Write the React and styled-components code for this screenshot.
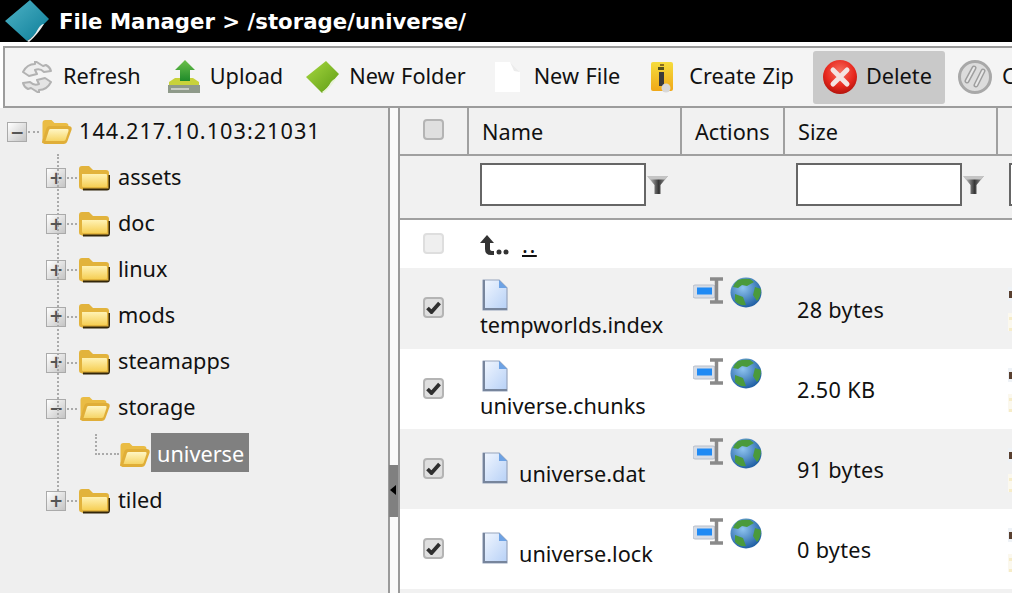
import React from "react";
import styled, { createGlobalStyle } from "styled-components";

const Global = createGlobalStyle`
  html, body { margin: 0; padding: 0; width: 1012px; height: 593px; overflow: hidden; background: #fff; }
  body { font-family: "DejaVu Sans", sans-serif; color: #111; }
  #root { width: 1012px; height: 593px; overflow: hidden; }
`;
const FONT = `"Noto Sans", "Open Sans", sans-serif`;

const Page = styled.div`display:flex;flex-direction:column;width:1012px;height:593px;overflow:hidden;font-family:${FONT};`;
const TitleBar = styled.header`display:flex;align-items:center;height:42px;flex:none;background:#000;padding-left:5px;gap:9px;`;
const Title = styled.h1`margin:0;font:bold 21.25px "DejaVu Sans",sans-serif;color:#fff;white-space:nowrap;`;
const Toolbar = styled.nav`display:flex;align-items:center;height:62px;flex:none;box-sizing:border-box;margin:4px 0 0 3px;border:2px solid #9c9c9c;border-right:0;background:#f4f4f4;padding-left:15px;overflow:hidden;`;
const ToolButton = styled.button`display:flex;align-items:center;flex:none;height:53px;box-sizing:border-box;margin:0 ${p => p.$mr ?? 0}px 0 0;padding:0 ${p => (p.$active ? "13px" : "0")} 0 ${p => (p.$active ? "9px" : "0")};gap:${p => p.$gap ?? 9}px;border:0;border-radius:3px;background:${p => (p.$active ? "#c9c9c9" : "transparent")};font:21.7px ${FONT};color:#111;white-space:nowrap;`;
const ToolLabel = styled.span`margin-bottom:4px;word-spacing:1px;`;
const Main = styled.div`display:flex;flex:1;min-height:0;`;
const TreePane = styled.aside`position:relative;width:388px;flex:none;background:#efefef;padding-top:1px;font-size:21.7px;box-sizing:border-box;`;
const TreeRow = styled.div`display:flex;align-items:center;height:46.15px;padding-left:${p => p.$indent}px;`;
const Expander = styled.span`display:flex;align-items:center;justify-content:center;width:20px;height:20px;flex:none;box-sizing:border-box;border:1px solid #aaa;background:linear-gradient(135deg,#fff,#c4c4c4);font:bold 17px/1 "DejaVu Sans",sans-serif;color:#555;`;
const Dots = styled.span`display:block;width:${p => p.$w}px;margin:0 2px 0 1px;flex:none;border-top:2px dotted #aaa;`;
const FolderSlot = styled.span`display:flex;flex:none;margin-right:${p => p.$mr ?? 8}px;`;
const TreeLabel = styled.span`white-space:nowrap;margin-bottom:4px;${p => p.$wide && "letter-spacing:1px;"}${p => p.$selected && "background:#808080;color:#fff;padding:5px 5px 3px 6px;line-height:31px;margin-bottom:5px;"}`;
const Children = styled.div`position:relative;&::before{content:"";position:absolute;left:57px;top:-1px;height:337px;border-left:2px dotted #aaa;}`;
const SubChildren = styled.div`position:relative;&::before{content:"";position:absolute;left:95px;top:2px;height:19px;width:22px;border-left:2px dotted #aaa;border-bottom:2px dotted #aaa;}`;
const Splitter = styled.div`position:relative;width:12px;flex:none;box-sizing:border-box;background:#fafafa;border-left:2px solid #9a9a9a;border-right:2px solid #9a9a9a;`;
const SplitToggle = styled.span`position:absolute;left:-1px;top:357px;width:9px;height:52px;background:#808080;&::after{content:"";position:absolute;left:1px;top:20px;border:5px solid transparent;border-left:0;border-right:6px solid #000;}`;
const Content = styled.section`flex:1;min-width:0;overflow:hidden;background:#fff;`;
const Table = styled.table`table-layout:fixed;width:830px;border-collapse:collapse;font-size:21.7px;`;
const Head = styled.th`height:47px;box-sizing:border-box;background:#f1f1f1;border-right:2px solid #a0a0a0;border-bottom:2px solid #a0a0a0;font-weight:400;text-align:left;padding:1px 0 0 13px;${p => p.$center && "text-align:center;padding:0 1px 8px 0;"}`;
const FilterRow = styled.tr`height:64px;background:#f1f1f1;`;
const FilterCell = styled.td`border-bottom:2px solid #a0a0a0;padding:0 0 5px 12px;`;
const FilterBox = styled.div`display:flex;align-items:center;gap:1px;`;
const FilterInput = styled.input`width:166px;height:43px;box-sizing:border-box;border:2px solid #666;background:#fff;padding:0;margin:0;`;
const Row = styled.tr`height:${p => p.$h ?? 80}px;background:${p => (p.$alt ? "#f1f1f1" : "#fff")};`;
const Cell = styled.td`padding:${p => p.$pad ?? "0 0 0 12px"};vertical-align:${p => (p.$top ? "top" : "middle")};${p => p.$center && "text-align:center;padding:0 1px 7px 0;"}`;
const Box = styled.span`display:inline-flex;align-items:center;justify-content:center;width:21px;height:21px;box-sizing:border-box;border:2px solid ${p => (p.$muted ? "#dedede" : "#b4b4b4")};border-radius:4px;background:${p => (p.$muted ? "#efefef" : "#dfdfdf")};vertical-align:middle;`;
const NameWrap = styled.div`display:flex;flex-wrap:wrap;align-items:flex-end;column-gap:11px;line-height:27px;`;
const NameIcon = styled.span`display:flex;flex:none;margin:0 0 3px 2px;`;
const NameText = styled.span`white-space:nowrap;margin-top:-3px;`;
const Actions = styled.div`display:flex;align-items:flex-start;gap:7px;`;
const UpLink = styled.div`display:flex;align-items:flex-end;gap:10px;`;
const Dotdot = styled.a`font-size:22px;line-height:22px;letter-spacing:1.500px;color:#111;text-decoration:underline;margin-bottom:1px;`;
const SizeText = styled.span`letter-spacing:.3px;`;
const Clip = styled.span`display:block;margin-left:-1px;`;

const Logo = () => (
  <svg width="45" height="42" viewBox="0 0 45 42">
    <defs><linearGradient id="lg" x1="0" y1="0" x2="1" y2="1"><stop offset="0" stopColor="#4fb3c6"/><stop offset="1" stopColor="#0c7d98"/></linearGradient></defs>
    <path d="M25 0 L44 19 L35 28 Q30 36 22 41 L0 21 Z" fill="url(#lg)"/>
    <path d="M22 41 Q29 37 33 29 Q36 24 39 24 Q33 34 24 42 Z" fill="#e9eeee"/>
  </svg>
);
const RefreshIcon = () => (
  <svg width="34" height="32" viewBox="0 0 34 32" fill="none" strokeLinejoin="round" strokeLinecap="round">
    <path d="M3 11 Q7 3 15 3 L15 0 L23 5 L26 4 Q30 6 31 10 L24 11 Q20 7 15 9 L17 13 L9 15 Z" fill="#eeeeee" stroke="#b2b2b2" strokeWidth="2"/>
    <path d="M31 21 Q27 29 19 29 L19 32 L11 27 L8 28 Q4 26 3 22 L10 21 Q14 25 19 23 L17 19 L25 17 Z" fill="#e4e4e4" stroke="#b2b2b2" strokeWidth="2"/>
  </svg>
);
const UploadIcon = () => (
  <svg width="34" height="36" viewBox="0 0 34 36">
    <defs><linearGradient id="ug" x1="0" y1="0" x2="0" y2="1"><stop offset="0" stopColor="#6cc04a"/><stop offset="1" stopColor="#1e8a2a"/></linearGradient></defs>
    <path d="M2 23 L8 19 H26 L32 23 V26 H2 Z" fill="#c8d23a"/>
    <path d="M18 1 L28 11 H23 V22 H13 V11 H8 Z" fill="url(#ug)"/>
    <rect x="1" y="26" width="32" height="8" fill="#8f9a8a"/>
    <rect x="4" y="29" width="18" height="2" fill="#c8ccc4"/>
  </svg>
);
const NewFolderIcon = () => (
  <svg width="34" height="32" viewBox="0 0 34 32">
    <defs><linearGradient id="nf" x1="0" y1="0" x2="1" y2="1"><stop offset="0" stopColor="#a8d840"/><stop offset="1" stopColor="#5d9c14"/></linearGradient></defs>
    <path d="M20 0 L33 13 L26 21 Q22 27 16 32 L0 16 Z" fill="url(#nf)"/>
    <path d="M16 31 Q22 27 25 21 Q27 18 30 18 Q25 26 18 32 Z" fill="#e8f2d8"/>
  </svg>
);
const PageIcon = () => (
  <svg width="25" height="30" viewBox="0 0 25 30">
    <path d="M0 0 H15 L25 10 V30 H0 Z" fill="#fff"/>
    <path d="M15 0 L19 9 L25 10 Z" fill="#ececec"/>
  </svg>
);
const ZipIcon = () => (
  <svg width="24" height="31" viewBox="0 0 24 31">
    <defs><linearGradient id="zg" x1="0" y1="0" x2="0" y2="1"><stop offset="0" stopColor="#f5dc3c"/><stop offset="1" stopColor="#f0a818"/></linearGradient></defs>
    <rect x="1" y="0" width="22" height="29" rx="2" fill="url(#zg)"/>
    <rect x="10" y="2" width="4" height="2" fill="#8a7020"/>
    <rect x="8" y="5" width="6" height="3" fill="#54501c"/>
    <rect x="9" y="10" width="5" height="14" fill="#3a3a3a"/>
    <circle cx="16" cy="26" r="4.500" fill="#d8d8d8"/>
  </svg>
);
const DeleteIcon = () => (
  <svg width="36" height="36" viewBox="0 0 36 36">
    <defs><radialGradient id="dg" cx=".5" cy=".35" r=".7"><stop offset="0" stopColor="#f77060"/><stop offset=".6" stopColor="#e8281e"/><stop offset="1" stopColor="#a80f08"/></radialGradient></defs>
    <circle cx="18" cy="18" r="17" fill="url(#dg)"/>
    <path d="M11 11 L25 25 M25 11 L11 25" stroke="#f4e4e2" strokeWidth="5" strokeLinecap="round"/>
  </svg>
);
const CancelIcon = () => (
  <svg width="36" height="36" viewBox="0 0 36 36" fill="none">
    <circle cx="18" cy="18" r="15.500" fill="#dcdcdc" stroke="#a8a8a8" strokeWidth="3"/>
    <path d="M17 9 L10 22 M26 12 L19 26" stroke="#9e9e9e" strokeWidth="5" strokeLinecap="round"/>
    <path d="M17 9 L10 22 M26 12 L19 26" stroke="#e8e8e8" strokeWidth="2" strokeLinecap="round"/>
  </svg>
);
const ClosedFolder = () => (
  <svg width="31" height="25" viewBox="0 0 31 25">
    <defs><linearGradient id="cf" x1="0" y1="0" x2="0" y2="1"><stop offset="0" stopColor="#fff2b4"/><stop offset="1" stopColor="#f6cf55"/></linearGradient></defs>
    <path d="M2 23 Q0 23 0 20 V3 Q0 0 3 0 H10 L14 4 H27 Q30 4 30 7 V21 Q30 24 27 24 H4 Z" fill="#e2b33c"/>
    <path d="M4 24.500 H28 Q31 24.500 31 21 V9 H29.500 V22.500 H4 Z" fill="#33260a"/>
    <path d="M3 8 H27 Q28 8 28 9 V20 Q28 21 27 21 H4 Q3 21 3 20 Z" fill="url(#cf)"/>
  </svg>
);
const OpenFolder = () => (
  <svg width="31" height="24" viewBox="0 0 30 24">
    <defs><linearGradient id="of" x1="0" y1="0" x2="0" y2="1"><stop offset="0" stopColor="#fff6c4"/><stop offset="1" stopColor="#f6d566"/></linearGradient></defs>
    <path d="M1 21 V3 Q1 0 4 0 H10 L13 3 H24 Q27 3 27 6 V8 H6 Z" fill="#eabc44"/>
    <path d="M1 23 Q0 23 1 20 L5 8 Q6 6 8 6 H27 Q31 6 30 10 L26 21 Q25 24 22 24 H3 Z" fill="#e0ae38"/>
    <path d="M4 21 L7.500 10 Q8 9 9 9 H26 Q27.500 9 27 11 L24 20 Q23.500 21 22 21 Z" fill="url(#of)"/>
  </svg>
);
const Funnel = () => (
  <svg width="21" height="18" viewBox="0 0 21 18">
    <defs><linearGradient id="fn" x1="0" y1="0" x2="1" y2="0"><stop offset="0" stopColor="#e4e4e4"/><stop offset=".55" stopColor="#383838"/><stop offset="1" stopColor="#aaa"/></linearGradient></defs>
    <path d="M0 0 H21 L13.500 9 V18 H7.500 V9 Z" fill="url(#fn)"/>
    <path d="M0 0 H21 L18 3.500 H3 Z" fill="#c4c4c4"/>
  </svg>
);
const Check = () => (
  <svg width="15" height="13" viewBox="0 0 15 13"><path d="M1.500 7 L5.500 11 L13.500 2" fill="none" stroke="#2e2e2e" strokeWidth="3.800"/></svg>
);
const UpIcon = () => (
  <svg width="32" height="21" viewBox="0 0 32 21" fill="#333">
    <path d="M7 0 L14 8 H10 V14 Q10 16 13 16 H14 V20 H11 Q5 20 5 14 V8 H0 Z"/>
    <circle cx="19" cy="17" r="2.500"/><circle cx="26" cy="17" r="2.500"/>
  </svg>
);
const FileIcon = () => (
  <svg width="26" height="32" viewBox="0 0 26 32">
    <defs><linearGradient id="fi" x1="0" y1="0" x2="1" y2="1"><stop offset="0" stopColor="#f2f7ff"/><stop offset="1" stopColor="#b6d0f6"/></linearGradient></defs>
    <path d="M1 1 H17 L25 9 V31 H1 Z" fill="url(#fi)" stroke="#98a6be" strokeWidth="1.200" strokeLinejoin="round"/>
    <path d="M17 1 V9 H25 Z" fill="#6da2e4"/>
    <path d="M1 31 H25 V29 H3 V1 H1 Z" fill="#77859c"/>
  </svg>
);
const RenameIcon = () => (
  <svg width="30" height="27" viewBox="0 0 30 27">
    <rect x="0" y="8" width="22" height="13" rx="2" fill="#d6dce6" stroke="#b8bfca"/>
    <rect x="4" y="10.500" width="15" height="7" fill="#1f8af4"/>
    <path d="M17 2 H30 M17 25 H30 M23.500 2 V25" stroke="#8a8a8a" strokeWidth="3.500" fill="none"/>
  </svg>
);
const Globe = () => (
  <svg width="32" height="31" viewBox="0 0 32 31">
    <defs><radialGradient id="gb" cx=".4" cy=".35" r=".7"><stop offset="0" stopColor="#8fc4f0"/><stop offset="1" stopColor="#1a5aa0"/></radialGradient></defs>
    <ellipse cx="16" cy="15.500" rx="15.500" ry="15" fill="url(#gb)"/>
    <path d="M8 3 Q14 1 20 2 L24 5 L17 9 L12 8 L8 11 L3 10 Q4 6 8 3 Z M25 10 L31 12 Q31 20 27 24 L23 18 Z M5 17 L13 20 L16 28 Q9 29 5 24 Z" fill="#4a9a3c"/>
  </svg>
);
const CutOff = () => (
  <Clip>
    <svg width="6" height="50" viewBox="0 0 6 50">
      <rect y="0" width="6" height="14" fill="#eef2f6"/>
      <rect x="1" y="4" width="4" height="7" fill="#5a4030"/>
      <rect y="26" width="6" height="12" fill="#fbf8ee"/>
      <rect x="1" y="30" width="4" height="3" fill="#f6ecc8"/>
      <rect y="38" width="6" height="6" fill="#fbf8ee"/>
      <rect x="1" y="41" width="4" height="3" fill="#f6ecc8"/>
    </svg>
  </Clip>
);

const TreeItem = ({ name, open }) => (
  <TreeRow $indent={46}>
    <Expander>{open ? "−" : "+"}</Expander>
    <Dots $w={10} />
    <FolderSlot>{open ? <OpenFolder /> : <ClosedFolder />}</FolderSlot>
    <TreeLabel>{name}</TreeLabel>
  </TreeRow>
);

const files = [
  { name: "tempworlds.index", size: "28 bytes", alt: true, h: 81 },
  { name: "universe.chunks", size: "2.50 KB" },
  { name: "universe.dat", size: "91 bytes", alt: true },
  { name: "universe.lock", size: "0 bytes" },
];

export default function App() {
  return (
    <Page>
      <Global />
      <TitleBar><Logo /><Title>File Manager &gt; /storage/universe/</Title></TitleBar>
      <Toolbar>
        <ToolButton $mr={26}><RefreshIcon /><ToolLabel>Refresh</ToolLabel></ToolButton>
        <ToolButton $mr={23}><UploadIcon /><ToolLabel>Upload</ToolLabel></ToolButton>
        <ToolButton $mr={29}><NewFolderIcon /><ToolLabel>New Folder</ToolLabel></ToolButton>
        <ToolButton $mr={30} $gap={14}><PageIcon /><ToolLabel>New File</ToolLabel></ToolButton>
        <ToolButton $mr={19} $gap={15}><ZipIcon /><ToolLabel>Create Zip</ToolLabel></ToolButton>
        <ToolButton $active $mr={12} $gap={8}><DeleteIcon /><ToolLabel>Delete</ToolLabel></ToolButton>
        <ToolButton><CancelIcon /><ToolLabel>Cancel</ToolLabel></ToolButton>
      </Toolbar>
      <Main>
        <TreePane>
          <TreeRow $indent={7}>
            <Expander>−</Expander>
            <Dots $w={11} />
            <FolderSlot $mr={7}><OpenFolder /></FolderSlot>
            <TreeLabel $wide>144.217.10.103:21031</TreeLabel>
          </TreeRow>
          <Children>
            {["assets", "doc", "linux", "mods", "steamapps"].map(n => <TreeItem key={n} name={n} />)}
            <TreeItem name="storage" open />
            <SubChildren>
              <TreeRow $indent={119}>
                <FolderSlot $mr={1}><OpenFolder /></FolderSlot>
                <TreeLabel $selected>universe</TreeLabel>
              </TreeRow>
            </SubChildren>
            <TreeItem name="tiled" />
          </Children>
        </TreePane>
        <Splitter><SplitToggle /></Splitter>
        <Content>
          <Table>
            <colgroup>
              <col width="68" /><col width="213" /><col width="103" /><col width="213" /><col width="233" />
            </colgroup>
            <thead>
              <tr>
                <Head $center><Box /></Head>
                <Head>Name</Head>
                <Head>Actions</Head>
                <Head>Size</Head>
                <Head />
              </tr>
              <FilterRow>
                <FilterCell />
                <FilterCell><FilterBox><FilterInput /><Funnel /></FilterBox></FilterCell>
                <FilterCell />
                <FilterCell><FilterBox><FilterInput /><Funnel /></FilterBox></FilterCell>
                <FilterCell><FilterBox><FilterInput /></FilterBox></FilterCell>
              </FilterRow>
            </thead>
            <tbody>
              <Row $h={49}>
                <Cell $center><Box $muted /></Cell>
                <Cell><UpLink><UpIcon /><Dotdot>..</Dotdot></UpLink></Cell>
                <Cell /><Cell /><Cell />
              </Row>
              {files.map(f => (
                <Row key={f.name} $alt={f.alt} $h={f.h}>
                  <Cell $center><Box><Check /></Box></Cell>
                  <Cell $pad="0 0 0 12px">
                    <NameWrap>
                      <NameIcon><FileIcon /></NameIcon>
                      <NameText>{f.name}</NameText>
                    </NameWrap>
                  </Cell>
                  <Cell $top $pad="9px 0 0 12px"><Actions><RenameIcon /><Globe /></Actions></Cell>
                  <Cell $pad="1px 0 0 13px"><SizeText>{f.size}</SizeText></Cell>
                  <Cell $pad="13px 0 0 12px"><CutOff /></Cell>
                </Row>
              ))}
              <Row $alt><Cell /><Cell /><Cell /><Cell /><Cell /></Row>
            </tbody>
          </Table>
        </Content>
      </Main>
    </Page>
  );
}
